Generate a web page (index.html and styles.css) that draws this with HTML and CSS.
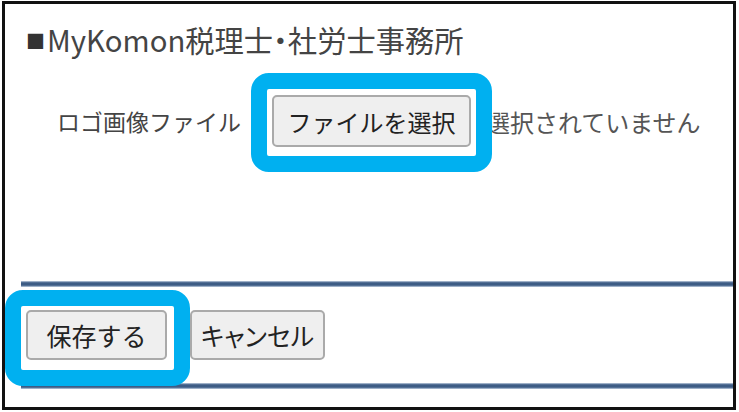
FILE: index.html
```html
<!DOCTYPE html>
<html lang="ja">
<head>
    <meta charset="UTF-8">
    <meta name="viewport" content="width=device-width, initial-scale=1.0">
    <title>ロゴ設定</title>
    <link rel="stylesheet" href="styles.css">
</head>
<body>
    <div class="frame">
        <h2 class="title"><span class="bullet">■</span>MyKomon税理士<span class="dot">・</span>社労士事務所</h2>

        <div class="logo-row">
            <span class="label">ロゴ画像ファイル</span>
            <button class="btn btn-file">ファイルを選択</button>
            <span class="file-name">選択されていません</span>
        </div>

        <hr class="rule rule-top">

        <div class="actions">
            <button class="btn btn-save">保存する</button>
            <button class="btn btn-cancel">キャンセル</button>
        </div>

        <hr class="rule rule-bottom">

        <div class="mark mark-file"></div>
        <div class="mark mark-save"></div>
    </div>
</body>
</html>
```

FILE: styles.css
```css
body {
    margin: 0;
    background: #fff;
    font-family: "Noto Sans CJK JP", "Noto Sans", sans-serif;
    color: #333;
}

.frame {
    position: relative;
    box-sizing: border-box;
    width: 734px;
    height: 409px;
    margin: 1px 0 0 2px;
    border: 3px solid #111;
    overflow: hidden;
}

.title {
    margin: 0;
    padding: 16px 0 0 21px;
    font-size: 29.3px;
    font-weight: normal;
    line-height: 38px;
    color: #444;
}

.bullet {
    font-size: 19px;
    margin-right: 2px;
    vertical-align: 3px;
    color: #333;
}

.dot {
    font-feature-settings: "palt";
}

.logo-row {
    display: flex;
    align-items: center;
    margin-top: 35px;
    padding-left: 52px;
}

.label {
    font-size: 23px;
    color: #444;
    margin-right: 31px;
}

.file-name {
    font-size: 24px;
    color: #555;
    margin-left: 15px;
}

.btn {
    box-sizing: border-box;
    height: 50px;
    padding: 0;
    border: 2px solid #aaa;
    border-radius: 5px;
    background: #efefef;
    font-family: inherit;
    font-size: 24px;
    color: #222;
}

.btn-file {
    width: 199px;
    height: 52px;
}

.btn-save {
    width: 141px;
    font-size: 25px;
}

.btn-cancel {
    width: 135px;
    font-size: 25px;
    font-feature-settings: "palt";
}

.rule {
    height: 6px;
    margin: 0 0 0 16px;
    border: none;
    background: linear-gradient(#c3d1e2, #3d5c85 30%, #3d5c85 70%, #c3d1e2);
}

.rule-top {
    margin-top: 134px;
}

.actions {
    display: flex;
    gap: 23px;
    padding: 23px 0 23px 21px;
}

.mark {
    position: absolute;
    box-sizing: border-box;
    border: 16px solid #00b0f0;
    border-radius: 18px;
}

.mark-file {
    left: 246px;
    top: 69px;
    width: 241px;
    height: 99px;
}

.mark-save {
    left: 0;
    top: 286px;
    width: 185px;
    height: 96px;
}
```
